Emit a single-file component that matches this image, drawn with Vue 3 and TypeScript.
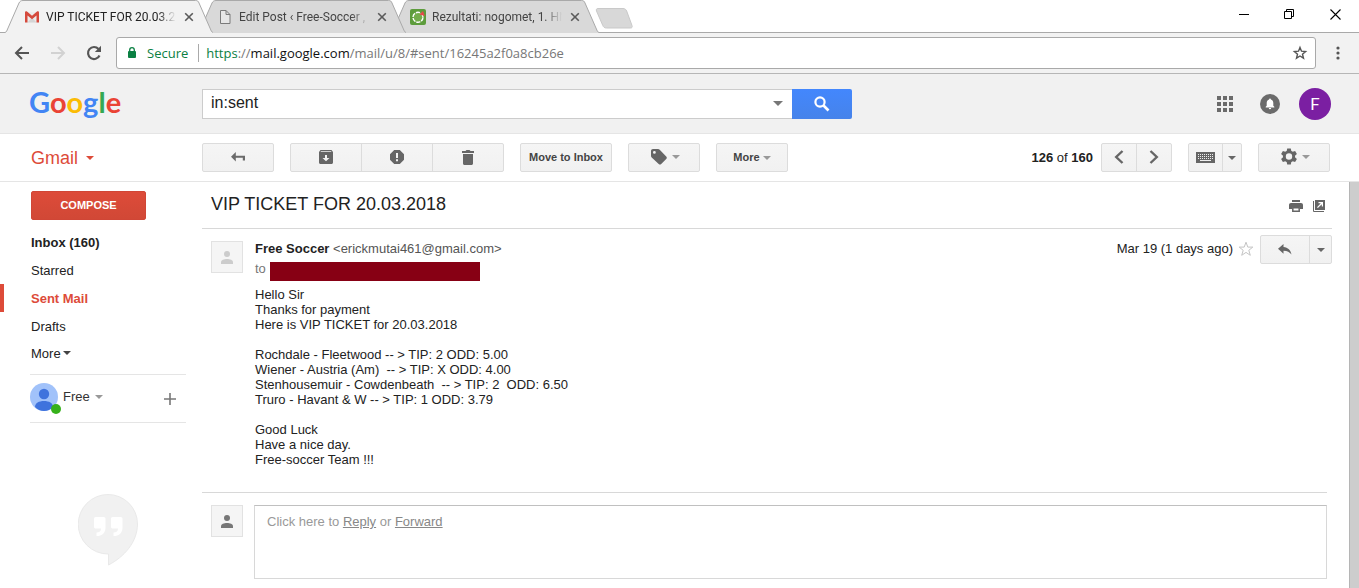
<script setup lang="ts">
import { ref } from 'vue'

interface Tab {
  title: string
  icon: 'gmail' | 'page' | 'score'
}

interface Folder {
  label: string
  bold?: boolean
}

const tabs: Tab[] = [
  { title: 'VIP TICKET FOR 20.03.20', icon: 'gmail' },
  { title: 'Edit Post ‹ Free-Soccer , F', icon: 'page' },
  { title: 'Rezultati: nogomet, 1. HN', icon: 'score' },
]
const activeTab = ref(0)

const folders: Folder[] = [
  { label: 'Inbox (160)', bold: true },
  { label: 'Starred' },
  { label: 'Sent Mail', bold: true },
  { label: 'Drafts' },
]
const activeFolder = ref('Sent Mail')

const query = ref('in:sent')

const body = [
  'Hello Sir',
  'Thanks for payment',
  'Here is VIP TICKET for 20.03.2018',
  '',
  'Rochdale - Fleetwood -- > TIP: 2 ODD: 5.00',
  'Wiener - Austria (Am)  -- > TIP: X ODD: 4.00',
  'Stenhousemuir - Cowdenbeath  -- > TIP: 2  ODD: 6.50',
  'Truro - Havant & W -- > TIP: 1 ODD: 3.79',
  '',
  'Good Luck',
  'Have a nice day.',
  'Free-soccer Team !!!',
].join('\n')
</script>

<template>
  <div class="window">
    <div class="tabstrip">
      <div class="tabs" role="tablist">
        <div v-for="(tab, i) in tabs" :key="tab.title" class="tab" :class="{ active: i === activeTab }">
          <svg class="tab-shape" width="208" height="33" viewBox="0 0 208 33" aria-hidden="true">
            <path class="tab-fill" d="M0 33V32.500L1.500 31.500L14 3C15 1.200 16 .5 18 .5H190.500C192.500 .5 193.300 1.200 194 3L206.500 31.500L208 32.500V33Z" />
            <path class="tab-line" d="M0 32.500L1.500 31.500L14 3C15 1.200 16 .5 18 .5H190.500C192.500 .5 193.300 1.200 194 3L206.500 31.500L208 32.500" />
          </svg>
          <svg v-if="tab.icon === 'gmail'" class="favicon" viewBox="0 0 16 16" aria-hidden="true">
            <path d="M2 3h12v10.500H2z" fill="#ececec" />
            <path d="M3.500 13.500L8 8.500l4.500 5z" fill="#d5d5d5" />
            <path d="M1 3.500V13.500h2.500V6.500L8 10.300l4.500-3.800v7H15V3.500c0-1.200-1.300-1.500-2-.9L8 6.800 3 2.600C2.200 2 1 2.400 1 3.500z" fill="#d54a3d" />
          </svg>
          <svg v-else-if="tab.icon === 'page'" class="favicon" viewBox="0 0 16 16" aria-hidden="true">
            <path d="M3.500 1.500h5.500l4 4v9H3.500zM9 1.500v4h4" fill="#e6e6e6" stroke="#7a7a7a" />
          </svg>
          <svg v-else class="favicon" viewBox="0 0 16 16" aria-hidden="true">
            <rect width="16" height="16" rx="2" fill="#5d9c3c" />
            <circle cx="8" cy="8.300" r="5" fill="#74ad4c" stroke="#fff" stroke-width="1.400" stroke-dasharray="4.200 1" />
            <path d="M9.500 5.500L13 2l1.800 5z" fill="#e8474a" />
          </svg>
          <button class="tab-title" role="tab" :aria-selected="i === activeTab" @click="activeTab = i">{{ tab.title }}</button>
          <button class="tab-close" aria-label="Close tab">
            <svg width="10" height="10" viewBox="0 0 10 10"><path d="M1.200 1.200l7.600 7.600M8.800 1.200L1.200 8.800" stroke="#5a5a5a" stroke-width="1.600" /></svg>
          </button>
        </div>
        <button class="new-tab" aria-label="New tab">
          <svg width="38" height="21" viewBox="0 0 38 21"><path d="M3 .5h25c2 0 3 1 3.700 2.600l5.300 14.400c.6 1.700 0 2.500-1.500 2.500H11.500c-2 0-3-.8-3.700-2.500L1.500 3C1 1.300 1.500 .5 3 .5z" fill="#d8d8d8" stroke="#c9c9c9" /></svg>
        </button>
      </div>
      <div class="window-controls">
        <button aria-label="Minimize"><svg width="11" height="11" viewBox="0 0 11 11"><path d="M1 5.500h10" stroke="#000" /></svg></button>
        <button aria-label="Restore"><svg width="11" height="11" viewBox="0 0 11 11"><path d="M.5 2.500h7v7h-7zM2.500 2.500v-2h7v7h-2" fill="none" stroke="#000" /></svg></button>
        <button aria-label="Close"><svg width="11" height="11" viewBox="0 0 11 11"><path d="M.5 .5l10 10M10.500 .5l-10 10" stroke="#000" stroke-width="1.100" /></svg></button>
      </div>
    </div>

    <div class="toolbar">
      <div class="nav-buttons">
        <button aria-label="Back"><svg width="16" height="14" viewBox="0 0 16 14"><path d="M15 7H2M8 1L2 7l6 6" fill="none" stroke="#555" stroke-width="2" /></svg></button>
        <button aria-label="Forward" disabled><svg width="16" height="14" viewBox="0 0 16 14"><path d="M1 7h13M8 1l6 6-6 6" fill="none" stroke="#d2d2d2" stroke-width="2" /></svg></button>
        <button aria-label="Reload"><svg width="16" height="16" viewBox="0 0 16 16"><path d="M13.500 10.500A6 6 0 1 1 12.500 4" fill="none" stroke="#555" stroke-width="2.200" /><path d="M15 .8V7H8.800z" fill="#555" /></svg></button>
      </div>
      <div class="omnibox">
        <svg class="lock" width="8" height="12" viewBox="0 0 8 12" aria-hidden="true"><rect x="0" y="4" width="8" height="7" rx="1" fill="#0b8043" /><path d="M1.700 4.500V3a2.300 2.300 0 0 1 4.600 0v1.500" fill="none" stroke="#0b8043" stroke-width="1.300" /></svg>
        <span class="secure">Secure</span>
        <div class="url" role="textbox" aria-label="Address" tabindex="0"><span class="scheme">https</span>://<span class="host">mail.google.com</span>/mail/u/8/#sent/16245a2f0a8cb26e</div>
        <button aria-label="Bookmark this page"><svg width="16" height="16" viewBox="0 0 16 16"><path d="M8 2.400l1.500 3.800 4.100.3-3.100 2.700 1 4L8 11l-3.500 2.200 1-4-3.100-2.700 4.100-.3z" fill="none" stroke="#555" stroke-width="1.400" /></svg></button>
      </div>
      <button class="menu" aria-label="Menu"><svg width="4" height="14" viewBox="0 0 4 14"><g fill="#555"><circle cx="2" cy="2" r="1.600" /><circle cx="2" cy="7" r="1.600" /><circle cx="2" cy="12" r="1.600" /></g></svg></button>
    </div>

    <header class="header">
      <a class="logo" href="#" aria-label="Google"><span class="b">G</span><span class="r">o</span><span class="y">o</span><span class="b">g</span><span class="g">l</span><span class="r">e</span></a>
      <form class="search" @submit.prevent>
        <label class="field">
          <input v-model="query" type="text" aria-label="Search mail" />
          <button type="button" aria-label="Search options"><i class="caret large"></i></button>
        </label>
        <button class="search-button" aria-label="Search"><svg width="16" height="16" viewBox="0 0 16 16"><circle cx="6" cy="6" r="4.600" fill="none" stroke="#fff" stroke-width="2.200" /><path d="M9.500 9.500l5 5" stroke="#fff" stroke-width="2.600" /></svg></button>
      </form>
      <div class="account">
        <button aria-label="Apps"><svg width="16" height="16" viewBox="0 0 16 16"><path d="M0 0h4v4H0zM6 0h4v4H6zM12 0h4v4h-4zM0 6h4v4H0zM6 6h4v4H6zM12 6h4v4h-4zM0 12h4v4H0zM6 12h4v4H6zM12 12h4v4h-4z" fill="#6b6b6b" /></svg></button>
        <button aria-label="Notifications"><svg width="20" height="20" viewBox="0 0 20 20"><circle cx="10" cy="10" r="10" fill="#6b6b6b" /><path d="M5.700 13.500v-.8l1-.9V9c0-1.800.9-3 2.400-3.400v-.3a.9.900 0 0 1 1.800 0v.3c1.500.4 2.400 1.600 2.400 3.400v2.800l1 .9v.8zM8.800 14h2.400a1.200 1.200 0 0 1-2.400 0z" fill="#fff" /></svg></button>
        <button class="avatar" aria-label="Account">F</button>
      </div>
    </header>

    <div class="actions">
      <button class="brand">Gmail <i class="caret"></i></button>
      <div class="group"><button class="back" aria-label="Back to Sent Mail"><svg width="14" height="10" viewBox="0 0 14 10"><path d="M0 4.700L4.800 0v3.700H14V8.500h-2.200V5.700H4.800v3.700z" fill="#6b6b6b" /></svg></button></div>
      <div class="group">
        <button class="third" aria-label="Archive"><svg width="14" height="14" viewBox="0 0 14 14"><path d="M1.500 0h11L14 2v10.500c0 .8-.7 1.500-1.500 1.500h-11C.7 14 0 13.300 0 12.500V2zM2 1.300l-.5.700h11L12 1.300zM6 5v3H3.500L7 11.300 10.500 8H8V5z" fill="#666" fill-rule="evenodd" /></svg></button>
        <button class="third" aria-label="Report spam"><svg width="14" height="14" viewBox="0 0 14 14"><path d="M4.200 0h5.600L14 4.200v5.600L9.800 14H4.200L0 9.800V4.200zM6 3v5h2V3zM6 9.300v2h2v-2z" fill="#666" fill-rule="evenodd" /></svg></button>
        <button class="third" aria-label="Delete"><svg width="12" height="15" viewBox="0 0 12 15"><path d="M0 1h3.500l1-1h3l1 1H12v2H0zM1 4h10v9.500c0 .8-.7 1.500-1.500 1.500h-7C1.700 15 1 14.300 1 13.500z" fill="#666" /></svg></button>
      </div>
      <div class="group"><button class="move">Move to Inbox</button></div>
      <div class="group"><button class="wide" aria-label="Labels"><svg width="16" height="16" viewBox="0 0 16 16"><path d="M0 2C0 .8.800 0 2 0h5c.7 0 1.200.2 1.700.7l6.500 6.700c.8.800.8 1.700 0 2.500l-5 5c-.8.800-1.700.8-2.500 0L.7 8.400C.2 8 0 7.500 0 6.800zM3.400 2a1.400 1.400 0 1 0 0 2.800 1.400 1.400 0 0 0 0-2.800z" fill="#666" fill-rule="evenodd" /></svg><i class="caret pale"></i></button></div>
      <div class="group"><button class="more">More<i class="caret pale"></i></button></div>
      <div class="spacer"></div>
      <span class="count"><b>126</b> of <b>160</b></span>
      <div class="group">
        <button class="half" aria-label="Newer"><svg width="10" height="14" viewBox="0 0 10 14"><path d="M8.500 1L2.200 7l6.300 6" fill="none" stroke="#666" stroke-width="2.400" /></svg></button>
        <button class="half last" aria-label="Older"><svg width="10" height="14" viewBox="0 0 10 14"><path d="M1.500 1L7.800 7l-6.300 6" fill="none" stroke="#666" stroke-width="2.400" /></svg></button>
      </div>
      <div class="group">
        <button class="keys" aria-label="Input tools"><svg width="19" height="11" viewBox="0 0 19 11"><path d="M0 0h19v11H0z" fill="#666" /><path d="M2 2.500h15M2 4.500h15M2 6.500h15" stroke="#eee" stroke-dasharray="1 1" /><path d="M4 8.500h11" stroke="#eee" /></svg></button>
        <button class="drop" aria-label="Select input tool"><i class="caret mid"></i></button>
      </div>
      <div class="group"><button class="wide" aria-label="Settings"><svg width="16" height="18" viewBox="0 0 16 18"><path d="M6.200 .5h3.600l.5 2.400c.5.200 1 .5 1.400.8l2.400-.8 1.800 3.100-1.900 1.700c.1.500.1 1.100 0 1.600l1.900 1.700-1.800 3.100-2.400-.8c-.4.300-.9.600-1.400.8l-.5 2.400H6.200l-.5-2.400c-.5-.2-1-.5-1.400-.8l-2.400.8L.1 11 2 9.300c-.1-.5-.1-1.100 0-1.600L.1 6l1.800-3.100 2.400.8c.4-.3.900-.6 1.400-.8zM8 5.300a3.200 3.200 0 1 0 0 6.400 3.200 3.200 0 0 0 0-6.400z" fill="#666" fill-rule="evenodd" /></svg><i class="caret pale"></i></button></div>
    </div>

    <div class="content">
      <aside class="sidebar">
        <button class="compose">COMPOSE</button>
        <nav>
          <a v-for="f in folders" :key="f.label" href="#" :class="{ bold: f.bold, current: f.label === activeFolder }" @click.prevent="activeFolder = f.label">{{ f.label }}</a>
          <a class="unfold" href="#">More<i class="caret dark"></i></a>
        </nav>
        <div class="chat">
          <svg width="32" height="32" viewBox="0 0 32 32" aria-hidden="true">
            <circle cx="14" cy="14" r="14" fill="#a1c2fa" />
            <circle cx="14" cy="11" r="5.200" fill="#3f73dd" />
            <path d="M5 24c0-4 4-6 9-6s9 2 9 6c-2.500 2.600-5.500 4-9 4s-6.500-1.400-9-4z" fill="#3f73dd" />
            <circle cx="26" cy="26" r="5" fill="#36b11b" />
          </svg>
          <button class="chat-name">Free<i class="caret pale"></i></button>
          <button class="chat-add" aria-label="New conversation"><svg width="12" height="12" viewBox="0 0 12 12"><path d="M6 0v12M0 6h12" stroke="#777" stroke-width="1.600" /></svg></button>
        </div>
        <svg class="hangouts" width="60" height="73" viewBox="0 0 60 73" aria-hidden="true">
          <path d="M30 .5a29.500 29.500 0 0 0 0 59.500h.5v11C46 63 59.500 48 59.500 30A29.500 29.500 0 0 0 30 .5z" fill="#f1f1f1" stroke="#e9e9e9" />
          <path d="M18 23h7.500c1.500 0 2 .8 2 2v8.500c0 5-2.500 7.500-7 8.500h-2v-3.500c3 0 4.500-1.500 4.500-4h-5c-1.500 0-2-.5-2-2V25c0-1.200.5-2 2-2zM35 23h7.500c1.500 0 2 .8 2 2v8.500c0 5-2.500 7.500-7 8.500h-2v-3.500c3 0 4.500-1.500 4.500-4h-5c-1.500 0-2-.5-2-2V25c0-1.200.5-2 2-2z" fill="#fff" />
        </svg>
      </aside>

      <main class="mail">
        <div class="subject">
          <h1>VIP TICKET FOR 20.03.2018</h1>
          <button aria-label="Print"><svg width="14" height="12" viewBox="0 0 14 12"><path d="M3 0h8v2H3zM2 3h10c1.200 0 2 .8 2 2v4h-3V7H3v2H0V5c0-1.200.8-2 2-2z" fill="#666" /><path d="M3.800 7.800h6.400v3.400H3.800z" fill="#fff" stroke="#666" stroke-width="1.500" /></svg></button>
          <button aria-label="Open in new window"><svg width="12" height="12" viewBox="0 0 12 12"><path d="M2 0h10v10H2zM5.500 2v1.300h2.300L4 7.200l.9.900 3.900-3.900v2.300H10V2z" fill="#666" fill-rule="evenodd" /><path d="M.5 1v10.500H11" fill="none" stroke="#666" /></svg></button>
        </div>
        <article class="message">
          <div class="person pale"><svg width="12" height="13" viewBox="0 0 12 13"><circle cx="6" cy="3" r="3" /><path d="M0 13v-1.700C0 9 3 8 6 8s6 1 6 3.300V13z" /></svg></div>
          <div class="text">
            <p class="from"><b>Free Soccer</b> &lt;erickmutai461@gmail.com&gt;</p>
            <p class="to">to <span class="redacted"></span></p>
            <p class="body">{{ body }}</p>
          </div>
          <div class="meta">
            <time>Mar 19 (1 days ago)</time>
            <button class="star" aria-label="Star"><svg width="16" height="16" viewBox="0 0 16 16"><path d="M8 1.200l1.800 4.900h5l-4 3.200 1.500 5L8 11.400l-4.300 2.900 1.500-5-4-3.200h5z" fill="none" stroke="#c4c4c4" /></svg></button>
            <div class="group">
              <button class="reply" aria-label="Reply"><svg width="14" height="11" viewBox="0 0 14 11"><path d="M5.500 0v3C10 3.500 12.700 6 13.500 10.500 11.500 8 9.500 6.800 5.500 6.700v3L0 4.800z" fill="#666" /></svg></button>
              <button class="drop" aria-label="More actions"><i class="caret mid"></i></button>
            </div>
          </div>
        </article>
        <div class="answer">
          <div class="person"><svg width="12" height="13" viewBox="0 0 12 13"><circle cx="6" cy="3" r="3" /><path d="M0 13v-1.700C0 9 3 8 6 8s6 1 6 3.300V13z" /></svg></div>
          <div class="answer-box">Click here to <a href="#">Reply</a> or <a href="#">Forward</a></div>
        </div>
      </main>
      <div class="scrollbar"></div>
    </div>
  </div>
</template>

<style>
body {
  margin: 0;
  overflow: hidden;
}
</style>

<style scoped>
.window {
  display: flex;
  flex-direction: column;
  min-height: 100vh;
  background: #fff;
  color: #222;
  font: 13px/15px "Liberation Sans", Arial, sans-serif;
}
.window * { box-sizing: border-box; }
button {
  display: inline-flex;
  align-items: center;
  justify-content: center;
  flex: none;
  margin: 0;
  padding: 0;
  border: 0;
  background: none;
  color: inherit;
  font: inherit;
}
svg { flex: none; display: block; }
p, h1 { margin: 0; }

.caret {
  width: 0;
  border: 4px solid transparent;
  border-top-color: currentColor;
  border-bottom: 0;
}
.caret.large { border-width: 5px 5px 0; color: #777; }
.caret.pale { color: #999; }
.caret.mid { color: #666; }
.caret.dark { color: #444; }

/* Browser frame */
.tabstrip {
  display: flex;
  justify-content: space-between;
  height: 33px;
  border-bottom: 1px solid #a9a9a9;
  font: 12px/16px Roboto, "Segoe UI", sans-serif;
}
.tabs { display: flex; padding-left: 5px; }
.tab {
  position: relative;
  display: flex;
  align-items: center;
  width: 208px;
  height: 33px;
  margin-right: -15px;
  padding: 0 19px;
  color: #444;
}
.tab:nth-child(1) { z-index: 3; }
.tab:nth-child(2) { z-index: 2; }
.tab:nth-child(3) { z-index: 1; }
.tab.active { z-index: 4; color: #222; }
.tab-shape { position: absolute; inset: 0; }
.tab-fill { fill: #d9d9d9; }
.active .tab-fill { fill: #f2f2f2; }
.tab-line { fill: none; stroke: #a9a9a9; }
.favicon { position: relative; width: 16px; height: 16px; }
.tab-title {
  position: relative;
  flex: 1;
  min-width: 0;
  margin-left: 6px;
  justify-content: flex-start;
  white-space: nowrap;
  mask-image: linear-gradient(to right, #000 86%, transparent);
}
.tab-close { position: relative; margin-left: 4px; padding-left: 4px; }
.new-tab { margin: 0 0 0 11px; height: 36px; }
.window-controls { display: flex; padding-right: 1px; }
.window-controls button { width: 46px; height: 29px; }

.toolbar {
  display: flex;
  align-items: center;
  height: 41px;
  border-bottom: 1px solid #b6b6b6;
  background: #f2f2f2;
  font: 13px/18px "Open Sans", "Segoe UI", sans-serif;
}
.nav-buttons { display: flex; padding: 0 4px; }
.nav-buttons button { width: 36px; height: 32px; }
.omnibox {
  display: flex;
  align-items: center;
  flex: 1;
  height: 32px;
  padding: 0 7px 0 11px;
  border: 1px solid #a9a9a9;
  border-radius: 3px;
  background: #fff;
}
.secure {
  margin-left: 11px;
  padding-right: 10px;
  border-right: 1px solid #aaa;
  color: #0b8043;
}
.url { flex: 1; padding-left: 7px; color: #777; white-space: nowrap; }
.scheme { color: #0b8043; }
.host { color: #111; }
.menu { width: 43px; height: 32px; }

/* Header */
.header {
  display: flex;
  align-items: center;
  height: 60px;
  padding-right: 28px;
  border-bottom: 1px solid #e5e5e5;
  background: #f1f1f1;
}
.logo {
  width: 202px;
  padding: 0 0 3px 29px;
  font: 700 29px/32px Lato, sans-serif;
  text-decoration: none;
}
.b { color: #4285f4; }
.r { color: #ea4335; }
.y { color: #fbbc05; }
.g { color: #34a853; }
.search { display: flex; flex: 0 1 650px; height: 30px; }
.field {
  display: flex;
  flex: 1;
  border: 1px solid #ccc;
  border-right: 0;
  background: #fff;
}
.field input {
  flex: 1;
  min-width: 0;
  padding: 0 8px 1px;
  border: 0;
  outline: 0;
  background: none;
  color: #222;
  font: 16px/20px "Liberation Sans", Arial, sans-serif;
}
.field button { width: 28px; }
.search-button {
  width: 60px;
  border-radius: 0 2px 2px 0;
  background: linear-gradient(#4387fd, #4683ea);
}
.account { display: flex; align-items: center; margin-left: auto; }
.account button + button { margin-left: 27px; }
.account .avatar {
  width: 32px;
  height: 32px;
  margin-left: 19px;
  border-radius: 50%;
  background: #7b1fa2;
  color: #fff;
  font: 17px/20px Roboto, sans-serif;
}

/* Actions */
.actions {
  display: flex;
  align-items: center;
  gap: 16px;
  height: 48px;
  padding-right: 29px;
  border-bottom: 1px solid #e5e5e5;
}
.brand {
  justify-content: flex-start;
  gap: 8px;
  width: 186px;
  padding-left: 31px;
  color: #dd4b39;
  font-size: 18px;
  line-height: 24px;
}
.group {
  display: flex;
  flex: none;
  height: 29px;
  border: 1px solid #dcdcdc;
  border-radius: 2px;
  background: linear-gradient(#f5f5f5, #f1f1f1);
}
.group button { color: #444; }
.group button + button { border-left: 1px solid #dcdcdc; }
.wide, .more, .back { width: 70px; }
.wide { gap: 5px; padding: 0 0 1px 3px; }
.back { padding: 0 1px 1px 0; }
.third { width: 71px; padding-bottom: 1px; }
.third:first-child { width: 70px; }
.move { width: 90px; }
.move, .more { font-size: 11px; font-weight: 700; }
.more { gap: 3px; }
.half { width: 34px; padding-bottom: 1px; }
.half.last { width: 35px; }
.keys { width: 33px; }
.drop { width: 19px; }
.spacer { flex: 1; }
.count { margin-right: -8px; }

/* Content */
.content { display: flex; flex: 1; }
.sidebar { flex: none; width: 202px; padding-top: 9px; }
.compose {
  width: 115px;
  height: 29px;
  margin-left: 31px;
  border: 1px solid #d04636;
  border-radius: 2px;
  background: linear-gradient(#dd4b39, #d14836);
  color: #fff;
  font-size: 11px;
  font-weight: 700;
}
nav { display: flex; flex-direction: column; margin-top: 8px; }
nav a {
  display: flex;
  align-items: center;
  gap: 2px;
  height: 28px;
  padding-left: 27px;
  border-left: 4px solid transparent;
  color: #222;
  text-decoration: none;
}
nav .bold { font-weight: 700; }
nav .current { border-color: #dd4b39; color: #dd4b39; }
nav .unfold { padding-bottom: 2px; }
.chat {
  display: flex;
  align-items: center;
  height: 49px;
  margin: 6px 16px 0 30px;
  border: solid #e5e5e5;
  border-width: 1px 0;
}
.chat-name { gap: 5px; margin: 0 auto 4px 1px; color: #333; }
.chat-add { margin-right: 10px; }
.hangouts { margin: 71px 0 0 78px; }

.mail { flex: 1; min-width: 0; padding: 0 17px 9px 0; }
.subject {
  display: flex;
  align-items: center;
  gap: 10px;
  height: 47px;
  padding: 1px 7px 0 9px;
  border-bottom: 1px solid #d8d8d8;
}
.subject h1 { flex: 1; padding-bottom: 3px; font-size: 18px; font-weight: 400; line-height: 24px; }
.message { display: flex; padding: 6px 0 25px 9px; }
.person {
  display: flex;
  align-items: center;
  justify-content: center;
  flex: none;
  width: 32px;
  height: 32px;
  border: 1px solid #e2e2e2;
  background: #f5f5f5;
  fill: #777;
}
.person.pale { fill: #ccc; }
.message .person { margin-top: 6px; }
.text { flex: 1; min-width: 0; padding: 6px 0 0 12px; }
.from { color: #555; }
.from b { color: #222; }
.to { display: flex; gap: 4px; margin-top: 5px; color: #777; }
.redacted { width: 210px; height: 19px; margin-top: 1px; background: #870014; }
.body { margin-top: 6px; white-space: pre-wrap; }
.meta { display: flex; align-items: flex-start; }
.meta time { padding-top: 6px; }
.star { margin: 6px 6px 0 5px; }
.reply { width: 48px; }
.meta .drop { width: 22px; }
.answer {
  display: flex;
  gap: 11px;
  margin-right: 5px;
  padding: 12px 0 0 9px;
  border-top: 1px solid #d8d8d8;
}
.answer-box {
  flex: 1;
  height: 74px;
  padding: 8px 12px;
  border: 1px solid #d8d8d8;
  border-top-color: #c0c0c0;
  color: #999;
}
.answer-box a { color: #888; }
.scrollbar { width: 10px; border-left: 1px solid #b5b5b5; background: #cdcdcd; }
</style>
